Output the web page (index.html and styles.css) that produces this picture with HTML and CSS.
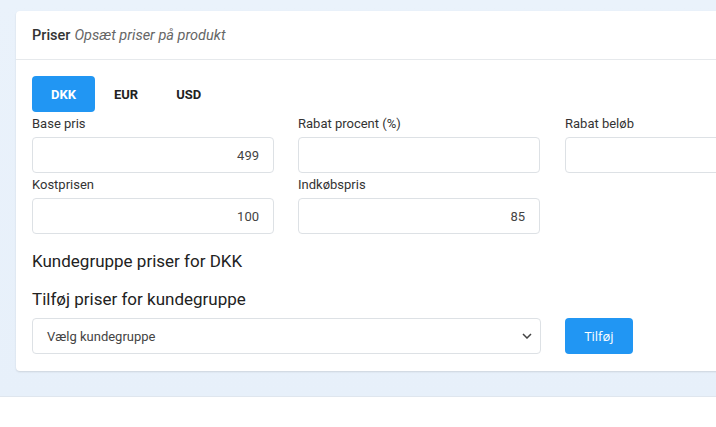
FILE: index.html
```html
<!DOCTYPE html>
<html lang="da">
<head>
  <meta charset="UTF-8" />
  <meta name="viewport" content="width=device-width, initial-scale=1.0"/>
  <title>Priser</title>
  <link rel="stylesheet" href="styles.css">
</head>
<body>
  <div class="page">
    <div class="card">
      <div class="card-header">
        <span class="title">Priser</span>
        <span class="subtitle">Opsæt priser på produkt</span>
      </div>
      <div class="card-body">
        <div class="tabs">
          <button class="tab active">DKK</button>
          <button class="tab">EUR</button>
          <button class="tab">USD</button>
        </div>

        <div class="grid">
          <div class="field">
            <label for="base">Base pris</label>
            <input type="text" id="base" value="499">
          </div>
          <div class="field">
            <label for="pct">Rabat procent (%)</label>
            <input type="text" id="pct">
          </div>
          <div class="field">
            <label for="amount">Rabat beløb</label>
            <input type="text" id="amount">
          </div>
          <div class="field">
            <label for="cost">Kostprisen</label>
            <input type="text" id="cost" value="100">
          </div>
          <div class="field">
            <label for="buy">Indkøbspris</label>
            <input type="text" id="buy" value="85">
          </div>
        </div>

        <h3 class="group-title">Kundegruppe priser for DKK</h3>
        <h3 class="add-title">Tilføj priser for kundegruppe</h3>

        <div class="add-row">
          <div class="select">
            <span>Vælg kundegruppe</span>
            <svg width="10" height="6" viewBox="0 0 10 6"><path d="M1 1l4 4 4-4" fill="none" stroke="#444" stroke-width="1.5"/></svg>
          </div>
          <button class="btn-add">Tilføj</button>
        </div>
      </div>
    </div>
  </div>
</body>
</html>
```

FILE: styles.css
```css
body {
  margin: 0;
  font-family: Roboto, "Liberation Sans", sans-serif;
  color: #333;
  background: #fff;
}

.page {
  background: linear-gradient(#eaf2fb, #e7f0fa);
  padding: 11px 0 25px 16px;
  overflow: hidden;
  border-bottom: 1px solid #dfe6ee;
}

.card {
  width: 860px;
  background: #fff;
  border-radius: 4px;
  box-shadow: 0 1px 2px rgba(0,0,0,0.12);
}

.card-header {
  height: 49px;
  padding: 0 16px;
  display: flex;
  align-items: center;
  gap: 4px;
  border-bottom: 1px solid #e6e9ec;
  font-size: 14.5px;
  box-sizing: border-box;
}
.title {
  font-weight: 500;
  color: #333;
}
.subtitle {
  font-style: italic;
  color: #666;
}

.card-body {
  padding: 16px 16px 17px;
}

.tabs {
  display: flex;
  gap: 0;
}
.tab {
  height: 36px;
  padding: 0 19px;
  border: none;
  background: none;
  border-radius: 4px;
  font-family: Roboto, sans-serif;
  font-size: 13px;
  font-weight: 700;
  color: #222;
  min-width: 62px;
}
.tab.active {
  background: #2196f3;
  color: #fff;
}

.grid {
  display: grid;
  grid-template-columns: 242px 242px 242px;
  column-gap: 24px;
}
.field:nth-child(3) {
  margin-left: 1px;
}
.field label {
  display: block;
  font-size: 13px;
  line-height: 15px;
  margin: 4px 0 6px;
  color: #333;
}
.field input {
  width: 100%;
  height: 36px;
  box-sizing: border-box;
  border: 1px solid #dde1e5;
  border-radius: 4px;
  text-align: right;
  padding: 0 14px;
  font-family: Roboto, sans-serif;
  font-size: 13px;
  color: #444;
}

.group-title {
  font-size: 17px;
  font-weight: 400;
  color: #222;
  margin: 17px 0 0;
  line-height: 20px;
}
.add-title {
  font-size: 17px;
  font-weight: 400;
  color: #222;
  margin: 18px 0 9px;
  line-height: 20px;
}

.add-row {
  display: flex;
  gap: 24px;
}
.select {
  width: 509px;
  height: 36px;
  box-sizing: border-box;
  border: 1px solid #dde1e5;
  border-radius: 4px;
  display: flex;
  align-items: center;
  justify-content: space-between;
  padding: 0 8px 0 14px;
  font-size: 13px;
  color: #444;
}
.btn-add {
  width: 68px;
  height: 36px;
  border: none;
  border-radius: 4px;
  background: #2196f3;
  color: #fff;
  font-family: "Open Sans", sans-serif;
  font-size: 13px;
}
```
